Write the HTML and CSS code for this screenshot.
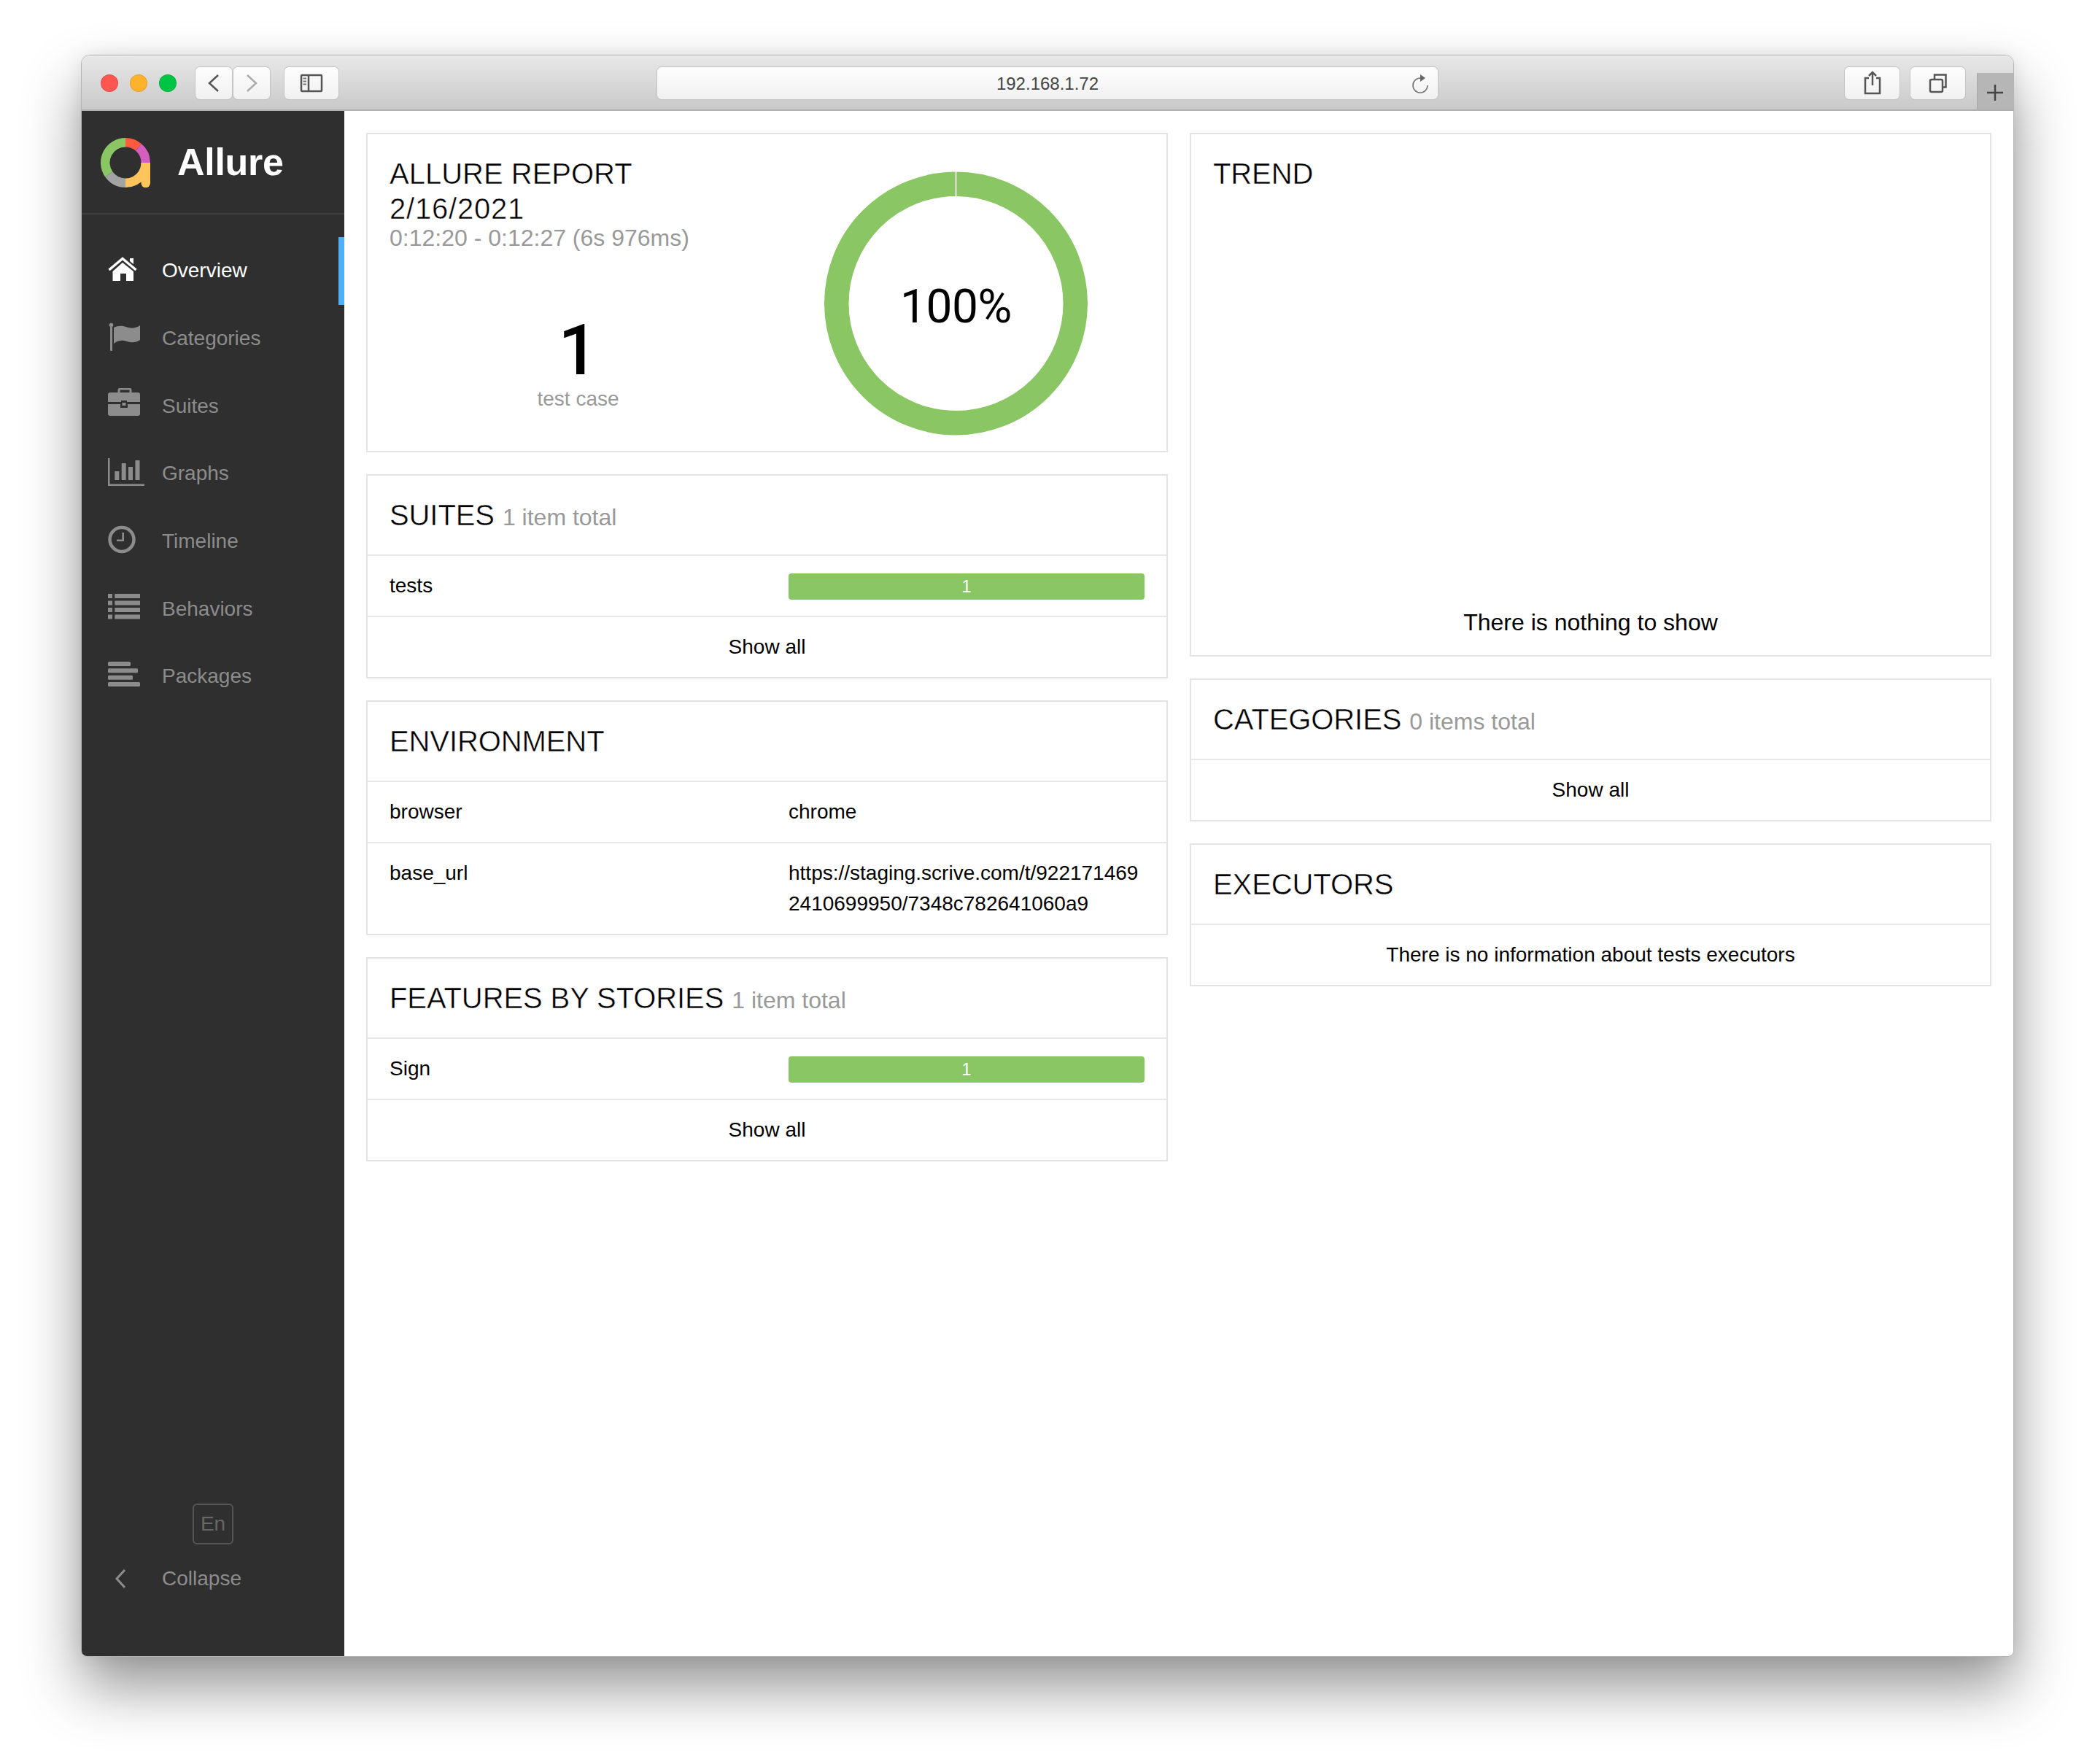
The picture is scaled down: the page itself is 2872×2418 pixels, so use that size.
FILE: index.html
```html
<!DOCTYPE html>
<html lang="en">
<head>
    <meta charset="UTF-8">
    <title>Allure Report</title>
    <link rel="stylesheet" href="styles.css">
</head>
<body>
    <div class="window">
        <div class="toolbar">
            <div class="lights">
                <span class="light light-red"></span>
                <span class="light light-orange"></span>
                <span class="light light-green"></span>
            </div>
            <div class="history">
                <div class="tool-btn nav-btn">
                    <svg width="50" height="44" viewBox="0 0 50 44"><polyline points="31,11 19,22 31,33" class="tool-line"/></svg>
                </div>
                <div class="tool-btn nav-btn">
                    <svg width="50" height="44" viewBox="0 0 50 44"><polyline points="19,11 31,22 19,33" class="tool-line tool-line-off"/></svg>
                </div>
            </div>
            <div class="tool-btn sidebar-btn">
                <svg width="74" height="44" viewBox="0 0 74 44">
                    <rect x="23" y="11" width="28" height="22" rx="1" class="tool-line"/>
                    <path d="M33 11V33" class="tool-line"/>
                    <path d="M25.500 15.500H30M25.500 19.500H30M25.500 23.500H30" class="tool-line tool-line-thin"/>
                </svg>
            </div>
            <div class="address">
                <span></span>
                <span class="address-text">192.168.1.72</span>
                <svg class="reload" width="24" height="28" viewBox="0 0 24 28">
                    <path d="M12 6A10 10 0 1 0 22 16" class="reload-arc"/>
                    <path d="M12 1L19 6L12 11Z" class="reload-head"/>
                </svg>
            </div>
            <div class="tool-btn action-btn">
                <svg width="75" height="44" viewBox="0 0 75 44">
                    <path d="M33 15H28V36H48V15H43" class="tool-line"/>
                    <path d="M38 7V25M33 12L38 7L43 12" class="tool-line"/>
                </svg>
            </div>
            <div class="tool-btn action-btn tabs-btn">
                <svg width="75" height="44" viewBox="0 0 75 44">
                    <rect x="27" y="17" width="17" height="17" rx="2" class="tool-line"/>
                    <path d="M33 16V10.500H48.500V27.500H44.500" class="tool-line"/>
                </svg>
            </div>
            <div class="new-tab">
                <svg width="50" height="50" viewBox="0 0 50 50"><path d="M14 27H36M25 16V38" class="tool-line tool-line-dark"/></svg>
            </div>
        </div>

        <div class="app">
            <aside class="side-nav">
                <div class="brand">
                    <svg class="brand-logo" width="68" height="68" viewBox="0 0 68 68">
                        <path d="M34 6.250A27.750 27.750 0 0 1 51.840 12.740" class="logo-seg" stroke="#fd5a3e"/>
                        <path d="M51.840 12.740A27.750 27.750 0 0 1 61.750 34" class="logo-seg" stroke="#d35ebe"/>
                        <path d="M61.750 34A27.750 27.750 0 0 1 34 61.750" class="logo-seg" stroke="#ffc55c"/>
                        <path d="M34 61.750A27.750 27.750 0 0 1 11.270 49.900" class="logo-seg" stroke="#a3a3a3"/>
                        <path d="M11.270 49.900A27.750 27.750 0 0 1 34 6.250" class="logo-seg" stroke="#8ac664"/>
                        <path d="M55.500 34H68V62A6 6 0 0 1 55.500 62Z" fill="#ffc55c"/>
                    </svg>
                    <span class="brand-name">Allure</span>
                </div>
                <nav class="nav-list">
                    <a class="nav-item active">
                        <svg class="nav-icon" width="52" height="50" viewBox="0 0 52 50">
                            <path d="M20 14L6.500 26V39H17V29H25V39H35V26Z"/>
                            <path d="M30 8H35V16L30 12Z"/>
                            <path d="M1.500 24L20 8.500L38.500 24" class="nav-stroke"/>
                        </svg>
                        Overview
                    </a>
                    <a class="nav-item">
                        <svg class="nav-icon" width="52" height="50" viewBox="0 0 52 50">
                            <rect x="3" y="8" width="3" height="34" rx="1"/>
                            <circle cx="4.500" cy="6.500" r="2.800"/>
                            <path d="M8 10C14 7 20 7 26 9.500C32 11.500 38 11 44 7V27C38 31 32 31 26 29C20 27 14 27 8 32Z"/>
                        </svg>
                        Categories
                    </a>
                    <a class="nav-item">
                        <svg class="nav-icon" width="52" height="50" viewBox="0 0 52 50">
                            <path d="M15 6V3A2 2 0 0 1 17 1H29A2 2 0 0 1 31 3V6" class="nav-stroke nav-stroke-thin"/>
                            <path d="M0 9A3 3 0 0 1 3 6H41A3 3 0 0 1 44 9V19H26V17H18V19H0Z"/>
                            <path d="M0 22H17V27H27V22H44V35A3 3 0 0 1 41 38H3A3 3 0 0 1 0 35Z"/>
                            <rect x="19.500" y="20" width="5" height="4"/>
                        </svg>
                        Suites
                    </a>
                    <a class="nav-item">
                        <svg class="nav-icon" width="52" height="50" viewBox="0 0 52 50">
                            <path d="M0 4H2.500V39.500H50V42H0Z"/>
                            <rect x="9.300" y="22" width="6" height="12"/>
                            <rect x="18.700" y="11" width="6" height="23"/>
                            <rect x="28" y="16" width="6" height="18"/>
                            <rect x="37.500" y="7" width="6" height="27"/>
                        </svg>
                        Graphs
                    </a>
                    <a class="nav-item">
                        <svg class="nav-icon" width="52" height="50" viewBox="0 0 52 50">
                            <circle cx="19" cy="22.500" r="16.500" class="nav-stroke nav-stroke-thick"/>
                            <path d="M19.300 13H22V25H12V22.500H19.300Z"/>
                        </svg>
                        Timeline
                    </a>
                    <a class="nav-item">
                        <svg class="nav-icon" width="52" height="50" viewBox="0 0 52 50">
                            <rect x="0" y="4" width="6" height="6"/>
                            <rect x="0" y="13.500" width="6" height="6"/>
                            <rect x="0" y="23" width="6" height="6"/>
                            <rect x="0" y="32.500" width="6" height="6"/>
                            <rect x="9.300" y="4" width="34.700" height="6"/>
                            <rect x="9.300" y="13.500" width="34.700" height="6"/>
                            <rect x="9.300" y="23" width="34.700" height="6"/>
                            <rect x="9.300" y="32.500" width="34.700" height="6"/>
                        </svg>
                        Behaviors
                    </a>
                    <a class="nav-item">
                        <svg class="nav-icon" width="52" height="50" viewBox="0 0 52 50">
                            <rect x="0" y="5" width="31" height="6" rx="1.500"/>
                            <rect x="0" y="14.300" width="41" height="6" rx="1.500"/>
                            <rect x="0" y="23.700" width="34" height="6" rx="1.500"/>
                            <rect x="0" y="33" width="44" height="6" rx="1.500"/>
                        </svg>
                        Packages
                    </a>
                </nav>
                <div class="side-footer">
                    <div class="lang-btn">En</div>
                    <a class="nav-item collapse-item">
                        <svg class="nav-icon" width="52" height="50" viewBox="0 0 52 50">
                            <polyline points="23,13 12,25 23,37" class="nav-stroke nav-stroke-thin"/>
                        </svg>
                        Collapse
                    </a>
                </div>
            </aside>

            <main class="dashboard">
                <div class="column">
                    <section class="widget">
                        <div class="summary">
                            <div class="summary-info">
                                <h2 class="summary-title">ALLURE REPORT<br><span class="summary-date">2/16/2021</span></h2>
                                <div class="summary-time">0:12:20 - 0:12:27 (6s 976ms)</div>
                                <div class="summary-count">1</div>
                                <div class="summary-label">test case</div>
                            </div>
                            <div class="donut">
                                <svg width="361" height="362" viewBox="0 0 361 362">
                                    <circle cx="180.500" cy="181" r="163.750" class="donut-ring"/>
                                    <rect x="179.700" y="0" width="1.600" height="34" fill="#fff"/>
                                </svg>
                                <span class="donut-value">100%</span>
                            </div>
                        </div>
                    </section>

                    <section class="widget">
                        <h2 class="widget-title">SUITES <span class="widget-count">1 item total</span></h2>
                        <div class="row">
                            <div>tests</div>
                            <div class="bar">1</div>
                        </div>
                        <div class="row row-center">Show all</div>
                    </section>

                    <section class="widget">
                        <h2 class="widget-title">ENVIRONMENT</h2>
                        <div class="row">
                            <div>browser</div>
                            <div>chrome</div>
                        </div>
                        <div class="row">
                            <div>base_url</div>
                            <div class="row-url">https://staging.scrive.com/t/9221714692410699950/7348c782641060a9</div>
                        </div>
                    </section>

                    <section class="widget">
                        <h2 class="widget-title">FEATURES BY STORIES <span class="widget-count">1 item total</span></h2>
                        <div class="row">
                            <div>Sign</div>
                            <div class="bar">1</div>
                        </div>
                        <div class="row row-center">Show all</div>
                    </section>
                </div>

                <div class="column">
                    <section class="widget trend">
                        <h2 class="widget-title widget-title-plain">TREND</h2>
                        <div class="trend-empty">There is nothing to show</div>
                    </section>

                    <section class="widget">
                        <h2 class="widget-title">CATEGORIES <span class="widget-count">0 items total</span></h2>
                        <div class="row row-center">Show all</div>
                    </section>

                    <section class="widget">
                        <h2 class="widget-title">EXECUTORS</h2>
                        <div class="row row-center">There is no information about tests executors</div>
                    </section>
                </div>
            </main>
        </div>
    </div>
</body>
</html>
```

FILE: styles.css
```css
html, body {
    margin: 0;
    padding: 0;
    background: #fff;
}

body {
    height: 2418px;
    overflow: hidden;
    font-family: "Liberation Sans", Arial, sans-serif;
    color: #000;
}

.window {
    width: 2650px;
    height: 2196px;
    margin: 75px 0 0 111px;
    box-sizing: border-box;
    border: 1px solid #b4b4b4;
    border-radius: 12px 12px 8px 8px;
    background: #fff;
    display: flex;
    flex-direction: column;
    overflow: hidden;
    box-shadow: 0 42px 80px rgba(0, 0, 0, 0.42), 0 0 24px rgba(0, 0, 0, 0.08);
}

/* browser chrome */
.toolbar {
    height: 76px;
    flex: none;
    box-sizing: border-box;
    border-bottom: 2px solid #b0b0b0;
    background: linear-gradient(#e8e8e8, #c9c9c9);
    display: flex;
    align-items: flex-start;
    padding: 16px 0 0 26px;
}

.lights {
    display: flex;
    gap: 16px;
    margin-top: 10px;
}

.light {
    width: 24px;
    height: 24px;
    box-sizing: border-box;
    border-radius: 50%;
    border: 1px solid rgba(0, 0, 0, 0.1);
}

.light-red { background: #ff5652; }
.light-orange { background: #ffb32c; }
.light-green { background: #00c443; }

.history {
    display: flex;
    gap: 2px;
    margin-left: 26px;
}

.tool-btn {
    height: 44px;
    box-sizing: border-box;
    border-radius: 6px;
    background: linear-gradient(#fdfdfd, #f1f1f1);
    box-shadow: 0 0 0 1px #c4c4c4, 0 1px 0 #aeaeae;
    flex: none;
}

.tool-btn svg {
    display: block;
}

.nav-btn { width: 50px; }
.sidebar-btn { width: 74px; margin-left: 20px; }
.action-btn { width: 75px; }
.tabs-btn { margin-left: 15px; }

.tool-line {
    fill: none;
    stroke: #555;
    stroke-width: 2.5;
}

.tool-line-off { stroke: #aaa; }
.tool-line-thin { stroke-width: 2; stroke: #777; }
.tool-line-dark { stroke: #444; }

.address {
    width: 1070px;
    height: 44px;
    margin-left: 437px;
    flex: none;
    border-radius: 6px;
    background: linear-gradient(#fdfdfd, #f1f1f1);
    box-shadow: 0 0 0 1px #c4c4c4, 0 1px 0 #aeaeae;
    display: grid;
    grid-template-columns: 1fr auto 1fr;
    align-items: center;
}

.address-text {
    font-size: 24px;
    line-height: 46px;
    color: #444;
}

.reload {
    justify-self: end;
    margin-right: 12px;
}

.reload-arc {
    fill: none;
    stroke: #777;
    stroke-width: 1.6;
}

.reload-head { fill: #666; }

.toolbar .action-btn:not(.tabs-btn) { margin-left: 558px; }

.new-tab {
    width: 50px;
    height: 50px;
    margin: 8px 0 0 16px;
    flex: none;
    background: #b6b6b6;
    box-shadow: inset 1px 0 0 #a8a8a8;
}

.new-tab svg { display: block; }

/* app layout */
.app {
    flex: 1;
    min-height: 0;
    display: flex;
}

.side-nav {
    width: 360px;
    flex: none;
    background: #2f2f2f;
    display: flex;
    flex-direction: column;
}

.brand {
    height: 142px;
    box-sizing: border-box;
    border-bottom: 2px solid #3e3e3e;
    padding: 37px 0 0 26px;
    display: flex;
    align-items: flex-start;
    gap: 37px;
}

.brand-logo { flex: none; }

.logo-seg {
    fill: none;
    stroke-width: 12.5;
}

.brand-name {
    font-size: 52px;
    font-weight: bold;
    color: #fff;
    line-height: 66px;
    letter-spacing: -0.3px;
}

.nav-list {
    margin-top: 31px;
}

.nav-item {
    height: 92.7px;
    box-sizing: border-box;
    padding-left: 36px;
    display: flex;
    align-items: center;
    font-size: 28px;
    color: #8c8c8c;
}

.nav-item.active {
    color: #fff;
    border-right: 8px solid #4fb0f5;
}

.nav-icon {
    width: 52px;
    flex: none;
    margin-right: 22px;
    fill: currentColor;
}

.nav-stroke {
    fill: none;
    stroke: currentColor;
    stroke-width: 3.5;
}

.nav-stroke-thin { stroke-width: 3; }
.nav-stroke-thick { stroke-width: 4.5; }

.side-footer {
    margin-top: auto;
    padding-bottom: 60px;
}

.lang-btn {
    width: 56px;
    height: 56px;
    box-sizing: border-box;
    margin: 0 auto;
    border: 2px solid #555;
    border-radius: 6px;
    display: flex;
    align-items: center;
    justify-content: center;
    font-size: 28px;
    color: #666;
}

/* widgets */
.dashboard {
    flex: 1;
    min-width: 0;
    padding: 30px 30px 0;
    display: grid;
    grid-template-columns: 1fr 1fr;
    gap: 30px;
    align-items: start;
}

.column {
    display: flex;
    flex-direction: column;
    gap: 30px;
}

.widget {
    border: 2px solid #e4e4e4;
}

.widget-title {
    margin: 0;
    padding: 30px;
    font-size: 40px;
    font-weight: normal;
    line-height: 48px;
    border-bottom: 2px solid #e8e8e8;
    -webkit-text-stroke: 0.5px #fff;
    letter-spacing: -0.1px;
}

.widget-title-plain { border-bottom: 0; }

.widget-count {
    font-size: 32px;
    line-height: 1;
    color: #999;
    -webkit-text-stroke: 0;
    letter-spacing: 0;
}

.row {
    display: grid;
    grid-template-columns: 547px 1fr;
    align-items: start;
    padding: 20px 30px;
    font-size: 28px;
    line-height: 42px;
    border-bottom: 2px solid #e8e8e8;
}

.row:last-child { border-bottom: 0; }

.row-center {
    display: block;
    text-align: center;
}

.row-url { word-break: break-all; }

.bar {
    height: 36px;
    margin-top: 4px;
    border-radius: 4px;
    background: #8ac664;
    color: #fff;
    font-size: 24px;
    line-height: 36px;
    text-align: center;
}

.summary {
    display: flex;
    padding: 30px 30px 21px;
}

.summary-info {
    width: 517px;
    flex: none;
}

.summary-title {
    margin: 0;
    font-size: 40px;
    font-weight: normal;
    line-height: 48px;
    -webkit-text-stroke: 0.5px #fff;
}

.summary-date { letter-spacing: 0.8px; }

.summary-time {
    font-size: 32px;
    line-height: 32px;
    color: #999;
}

.summary-count {
    margin-top: 90px;
    font-family: Roboto, "Liberation Sans", sans-serif;
    font-size: 96px;
    font-weight: 500;
    line-height: 96px;
    text-align: center;
}

.summary-label {
    margin-top: 1px;
    font-size: 28px;
    line-height: 36px;
    color: #999;
    text-align: center;
}

.donut {
    margin: 21px 0 0 79px;
    display: grid;
    place-items: center;
}

.donut svg,
.donut-value {
    grid-area: 1 / 1;
}

.donut svg { display: block; }

.donut-ring {
    fill: none;
    stroke: #8ac664;
    stroke-width: 33.5;
}

.donut-value {
    font-family: Roboto, "Liberation Sans", sans-serif;
    font-size: 64px;
    line-height: 66px;
    padding-top: 9px;
    letter-spacing: -0.5px;
}

.trend {
    height: 718px;
    box-sizing: border-box;
    display: flex;
    flex-direction: column;
}

.trend-empty {
    margin-top: auto;
    padding-bottom: 21px;
    font-size: 32px;
    line-height: 48px;
    text-align: center;
}
```
